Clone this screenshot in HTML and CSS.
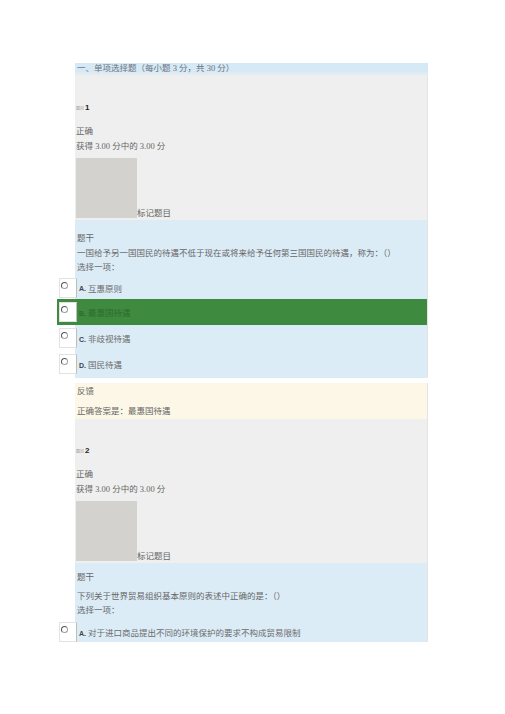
FILE: index.html
```html
<html>
<head>
	<title>单项选择题</title>
	<meta charset="utf-8">
	<link rel="stylesheet" href="styles.css">
</head>
<body>
	<section id="quiz">
		<div class="heading">一、单项选择题（每小题 3 分，共 30 分）</div>

		<div class="info">
			<div class="qno"><span class="small">题目</span><b>1</b></div>
			<div class="state">正确</div>
			<div class="grade">获得 3.00 分中的 3.00 分</div>
			<div class="flag"><span class="flagimg"></span><span>标记题目</span></div>
		</div>
		<div class="content">
			<div class="label">题干</div>
			<div class="qtext">一国给予另一国国民的待遇不低于现在或将来给予任何第三国国民的待遇，称为：（）</div>
			<div class="prompt">选择一项：</div>
			<div class="answer">
				<div class="option"><span class="radio"><i></i></span><span class="letter">A.</span>互惠原则</div>
				<div class="option correct"><span class="radio"><i></i></span><span class="letter">B.</span>最惠国待遇</div>
				<div class="option"><span class="radio"><i></i></span><span class="letter">C.</span>非歧视待遇</div>
				<div class="option"><span class="radio"><i></i></span><span class="letter">D.</span>国民待遇</div>
			</div>
		</div>
		<div class="feedback">
			<div class="label">反馈</div>
			<div class="rightanswer">正确答案是：最惠国待遇</div>
		</div>

		<div class="info">
			<div class="qno"><span class="small">题目</span><b>2</b></div>
			<div class="state">正确</div>
			<div class="grade">获得 3.00 分中的 3.00 分</div>
			<div class="flag"><span class="flagimg"></span><span>标记题目</span></div>
		</div>
		<div class="content last">
			<div class="label">题干</div>
			<div class="qtext">下列关于世界贸易组织基本原则的表述中正确的是：（）</div>
			<div class="prompt">选择一项：</div>
			<div class="answer">
				<div class="option"><span class="radio"><i></i></span><span class="letter">A.</span>对于进口商品提出不同的环境保护的要求不构成贸易限制</div>
			</div>
		</div>
	</section>
</body>
</html>
```

FILE: styles.css
```css
body {
	margin: 0;
	background: #ffffff;
	font-family: "Liberation Serif", "Noto Sans CJK SC", serif;
	font-size: 8.5px;
	color: #666;
}
#quiz {
	margin: 63px 0 0 75px;
	width: 353px;
}
.heading {
	height: 13px;
	line-height: 11px;
	padding-left: 2px;
	color: #6a7480;
	background: linear-gradient(#d4e9f6 0%, #d6e9f5 65%, #eeeeee 100%);
}
.info {
	background: #efefef;
	padding: 26px 0 2px 1px;
	border-right: 1px solid #e4e4e4;
}
.qno {
	height: 12px;
	line-height: 12px;
	margin-bottom: 10px;
	color: #222;
}
.qno .small {
	font-size: 4px;
	color: #999;
	margin-right: 1px;
}
.qno b {
	font-family: "Liberation Sans", sans-serif;
	font-size: 8px;
}
.state, .grade {
	line-height: 15px;
}
.flag {
	display: flex;
	align-items: flex-end;
	margin-top: 4px;
}
.flagimg {
	display: block;
	width: 61px;
	height: 60px;
	background: #d4d2ce;
}
.flag span + span {
	line-height: 12px;
	margin-bottom: -1px;
}
.content {
	background: #dcecf7;
	padding: 11px 0 1px 2px;
	border-right: 1px solid #e4e4e4;
}
.label {
	line-height: 14px;
	margin-bottom: 1px;
}
.qtext, .prompt {
	line-height: 14px;
}
.answer {
	margin-top: 2px;
	margin-left: -20px;
}
.option {
	display: flex;
	align-items: center;
	height: 26px;
	color: #6b6b6b;
}
.option:first-child {
	height: 23px;
}
.option.correct {
	background: #3e8a3e;
	color: #2f6a30;
}
.radio {
	display: block;
	width: 16px;
	height: 18px;
	background: #ffffff;
	border: 1px solid #e2e2e2;
	border-right-color: #bdbdbd;
	margin: 0 2px 0 2px;
	position: relative;
}
.radio i {
	position: absolute;
	left: 1px;
	top: 3px;
	width: 5px;
	height: 5px;
	border: 1px solid #a0a0a0;
	border-top-color: #555;
	border-left-color: #555;
	border-radius: 50%;
	background: #fff;
}
.letter {
	font-family: "Liberation Sans", sans-serif;
	font-size: 7px;
	font-weight: bold;
	color: #444;
	margin-right: 2px;
	margin-top: 2px;
}
.option.correct .letter {
	color: #2f6a30;
}
.feedback {
	margin-top: 5px;
	background: #fcf7e7;
	padding: 1px 0 0 2px;
	height: 35px;
	border-right: 1px solid #e4e4e4;
}
.feedback .label {
	margin-bottom: 6px;
}
.rightanswer {
	line-height: 14px;
}
.content.last {
	padding-top: 7px;
	padding-bottom: 0;
}
.content.last .label {
	margin-bottom: 5px;
}
.content.last .answer {
	margin-top: 5px;
}
.content.last .option {
	height: 20px;
}
```
